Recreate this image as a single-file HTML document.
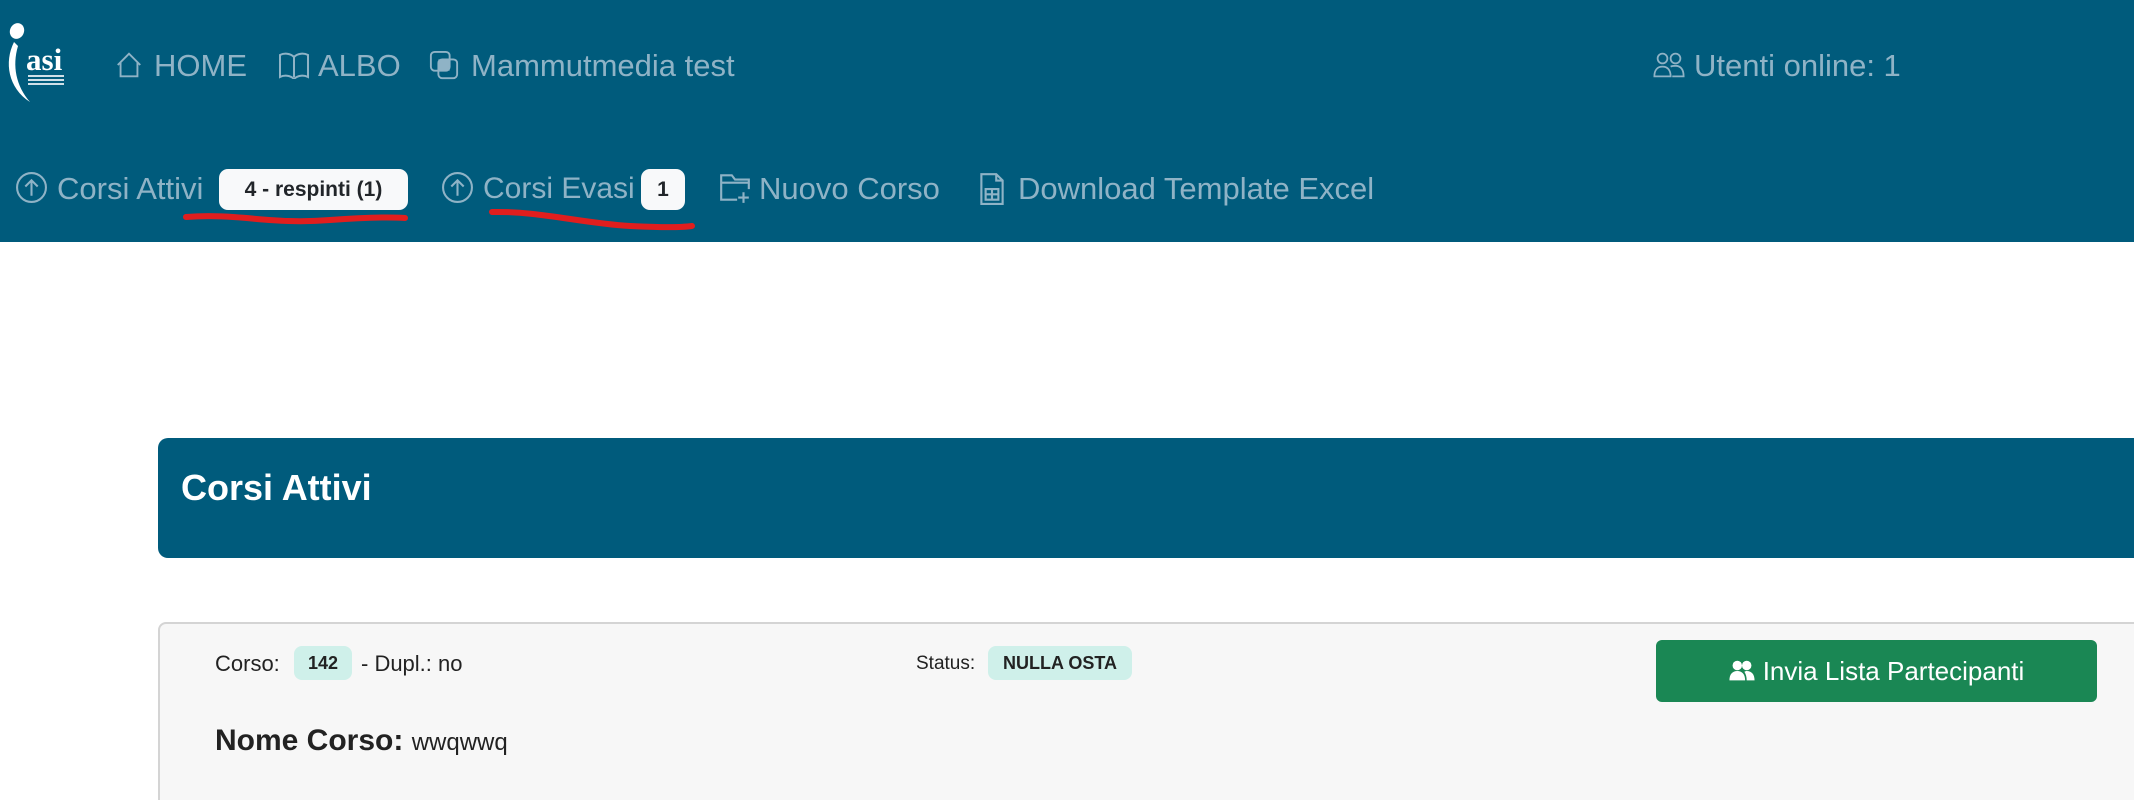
<!DOCTYPE html>
<html><head><meta charset="utf-8"><style>
*{margin:0;padding:0;box-sizing:border-box}
html,body{width:2134px;height:800px;overflow:hidden}
body{background:#fff;font-family:"Liberation Sans",sans-serif}
#w{position:relative;width:2134px;height:800px;overflow:hidden}
.hdr{position:absolute;left:0;top:0;width:2134px;height:242px;background:#005b7c}
.t{position:absolute;color:#8fb3c6;font-size:31px;white-space:nowrap;line-height:1}
.ic{position:absolute}
.badge{position:absolute;background:#f8f9fa;color:#212529;font-weight:bold;font-size:21px;border-radius:9px;display:flex;align-items:center;justify-content:center}
.red{position:absolute}
.card1{position:absolute;left:158px;top:438px;width:1976px;height:120px;background:#005b7c;border-radius:10px 0 0 10px}
.card1 span{position:absolute;left:23px;top:29px;color:#fff;font-weight:bold;font-size:36px}
.card2{position:absolute;left:158px;top:622px;width:1976px;height:178px;background:#f7f7f7;border-top:2px solid #d4d4d4;border-left:2px solid #d4d4d4;border-radius:8px 0 0 0}
.s{position:absolute;color:#222;font-size:22px;white-space:nowrap}
.pb{position:absolute;background:#cff0ea;border-radius:8px;font-weight:bold;font-size:18px;color:#222;display:flex;align-items:center;justify-content:center}
.btn{position:absolute;left:1656px;top:640px;width:441px;height:62px;background:#1a8754;border-radius:6px;color:#fff;font-size:26px;display:flex;align-items:center;justify-content:center;gap:8px}
</style></head><body><div id="w">
<div class="hdr"></div>
<svg class="ic" style="left:4px;top:22px" width="64" height="82" viewBox="0 0 64 82">
<ellipse cx="13" cy="9" rx="7" ry="8" fill="#fff" transform="rotate(25 13 9)"/>
<path d="M10 20 C0 40 4 66 26 80 C12 64 8 44 14 24 Z" fill="#fff"/>
<text x="22" y="48" font-family="Liberation Serif,serif" font-weight="bold" font-size="31" fill="#fff">asi</text>
<rect x="24" y="53" width="36" height="2" fill="#cfe0e8"/><rect x="24" y="57" width="36" height="2" fill="#cfe0e8"/><rect x="24" y="61" width="36" height="2" fill="#cfe0e8"/>
</svg>
<svg class="ic" style="left:114px;top:50px" width="30" height="30" viewBox="0 0 16 16" fill="none" stroke="#8fb3c6" stroke-width="1"><path d="M2 8 8 2l6 6M3.5 6.5V14h9V6.5"/></svg>
<div class="t" style="left:154px;top:50px">HOME</div>
<svg class="ic" style="left:278px;top:51px" width="32" height="28" viewBox="0 0 16 14" fill="none" stroke="#8fb3c6" stroke-width="1"><path d="M1 2c2-1 5-1 7 1 2-2 5-2 7-1v11c-2-1-5-1-7 1-2-2-5-2-7-1zM8 3v10"/></svg>
<div class="t" style="left:318px;top:50px">ALBO</div>
<svg class="ic" style="left:429px;top:49px" width="30" height="32" viewBox="0 0 16 16"><rect x="1" y="1" width="10" height="10" rx="2" fill="none" stroke="#8fb3c6"/><rect x="5" y="5" width="10" height="10" rx="2" fill="none" stroke="#8fb3c6"/><rect x="5" y="5" width="6" height="6" fill="#8fb3c6"/></svg>
<div class="t" style="left:471px;top:50px">Mammutmedia test</div>
<svg class="ic" style="left:1652px;top:52px" width="34" height="26" viewBox="0 0 20 16" fill="none" stroke="#8fb3c6" stroke-width="1.1"><circle cx="6" cy="4" r="3"/><circle cx="14" cy="4" r="3"/><path d="M1 15c0-4 2-6 5-6s5 2 5 6zM11 9c1-.5 2-.5 3-.5 3 0 5 2 5 6.5h-7"/></svg>
<div class="t" style="left:1694px;top:50px">Utenti online: 1</div>
<svg class="ic" style="left:15px;top:171px" width="33" height="33" viewBox="0 0 16 16" fill="none" stroke="#8fb3c6" stroke-width="1"><circle cx="8" cy="8" r="7"/><path d="M8 12V4.5M5 7.5l3-3 3 3"/></svg>
<div class="t" style="left:57px;top:173px">Corsi Attivi</div>
<div class="badge" style="left:219px;top:169px;width:189px;height:41px">4 - respinti (1)</div>
<svg class="ic" style="left:441px;top:171px" width="33" height="33" viewBox="0 0 16 16" fill="none" stroke="#8fb3c6" stroke-width="1"><circle cx="8" cy="8" r="7"/><path d="M8 12V4.5M5 7.5l3-3 3 3"/></svg>
<div class="t" style="left:483px;top:174px;font-size:30px">Corsi Evasi</div>
<div class="badge" style="left:641px;top:169px;width:44px;height:41px">1</div>
<svg class="ic" style="left:718px;top:172px" width="34" height="32" viewBox="0 0 16 15" fill="none" stroke="#8fb3c6" stroke-width="1"><path d="M9 13H1.5V1.5h5l1.5 2h6.5V8M1.5 5h13M12 9.5v5M9.5 12h5"/></svg>
<div class="t" style="left:759px;top:173px">Nuovo Corso</div>
<svg class="ic" style="left:979px;top:172px" width="26" height="34" viewBox="0 0 12 16" fill="none" stroke="#8fb3c6" stroke-width="1"><path d="M1 1h7l3 3v11H1zM8 1v3h3M3 8h6v5H3zM3 10.5h6M6 8v5"/></svg>
<div class="t" style="left:1018px;top:173px">Download Template Excel</div>
<svg class="red" style="left:180px;top:205px" width="520" height="32" viewBox="0 0 520 32">
<path d="M6 12 C60 8 90 20 150 15 C190 12 210 12 225 13" stroke="#e01e1e" stroke-width="6" fill="none" stroke-linecap="round"/>
<path d="M312 7 C360 6 400 18 450 21 C490 23 505 22 512 21" stroke="#e01e1e" stroke-width="6" fill="none" stroke-linecap="round"/>
</svg>
<div class="card1"><span>Corsi Attivi</span></div>
<div class="card2"></div>
<div class="s" style="left:215px;top:651px">Corso:</div>
<div class="pb" style="left:294px;top:646px;width:58px;height:34px">142</div>
<div class="s" style="left:361px;top:651px">- Dupl.: no</div>
<div class="s" style="left:916px;top:653px;font-size:19px">Status:</div>
<div class="pb" style="left:988px;top:646px;width:144px;height:34px">NULLA OSTA</div>
<div class="btn"><svg width="26" height="22" viewBox="0 0 16 14" fill="#fff"><circle cx="5" cy="3.5" r="3"/><circle cx="11" cy="3.5" r="3"/><path d="M0 13c0-4 2-6 5-6s5 2 5 6zM9.5 7.5c.5-.3 1-.5 1.5-.5 3 0 5 2 5 6h-5c0-2-.5-4-1.5-5.5z"/></svg>Invia Lista Partecipanti</div>
<div class="s" style="left:215px;top:724px;font-size:30px"><b>Nome Corso:</b> <span style="font-size:24px">wwqwwq</span></div>
</div></body></html>
